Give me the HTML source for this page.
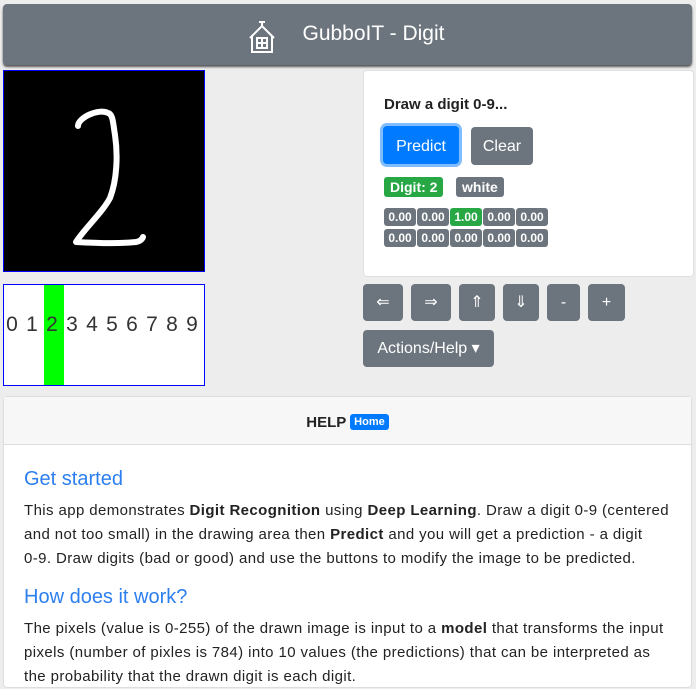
<html><head><style>
body{margin:0;background:#ededed;font-family:"Liberation Sans",sans-serif;width:696px;height:676px;overflow:hidden;position:relative}
.hdr{position:absolute;left:3px;top:4px;width:689px;height:61px;background:#6c757d;border-radius:4px;box-shadow:0 2px 2px #555;color:#fff;font-size:21px;text-align:center;line-height:60px}
.abs{position:absolute}
.btn{position:absolute;background:#6c757d;color:#fff;border-radius:4px;font-size:16px;text-align:center}
.b{display:inline-block;height:18px;line-height:18px;font-size:12px;font-weight:bold;color:#fff;background:#6c757d;border-radius:3px;width:32px;text-align:center;margin-right:1px}
.d{position:absolute;top:28px;width:20px;text-align:center;font-size:21px;color:#333}
</style></head><body>
<div class="hdr"><svg class="abs" style="left:243px;top:16px" width="32" height="34" viewBox="0 0 32 34" fill="none" stroke="#fff" stroke-width="2"><path d="M13 2h6M16 2v4M4 18L16 6l12 12M6 16v16h20V16M11 18h10v10H11zM16 18v10M11 23h10"/></svg><span style="margin-left:52px">GubboIT - Digit</span></div>
<div class="abs" style="left:3px;top:70px;width:200px;height:200px;background:#000;border:1px solid #00f">
<svg width="200" height="200"><path d="M74 55c0-8 20-18 30-13 5 1 5 10 7 22 3 20 2 45-5 63-8 15-25 30-34 44 20 1 40 2 60 0 6-1 7-5 7-5" stroke="#fff" stroke-width="6" fill="none" stroke-linecap="round" stroke-linejoin="round"/></svg></div>
<div class="abs" style="left:3px;top:284px;width:200px;height:100px;background:#fff;border:1px solid #00f"><div class="abs" style="left:40px;top:0;width:20px;height:100px;background:#0f0"></div>
<span class="d" style="left:-2px">0</span><span class="d" style="left:18px">1</span><span class="d" style="left:38px">2</span><span class="d" style="left:58px">3</span><span class="d" style="left:78px">4</span><span class="d" style="left:98px">5</span><span class="d" style="left:118px">6</span><span class="d" style="left:138px">7</span><span class="d" style="left:158px">8</span><span class="d" style="left:178px">9</span></div>
<div class="abs" style="left:363px;top:70px;width:329px;height:205px;background:#fff;border-radius:4px;border:1px solid #e0e0e0"></div>
<div class="abs" style="left:384px;top:96px;font-size:15px;font-weight:bold;color:#222">Draw a digit 0-9...</div>
<div class="btn" style="left:383px;top:126px;width:76px;height:38px;line-height:42px;background:#007bff;box-shadow:0 0 0 3px #80bdff">Predict</div>
<div class="btn" style="left:471px;top:127px;width:62px;height:38px;line-height:40px">Clear</div>
<div class="abs" style="left:384px;top:177px;height:20px;line-height:20px;padding:0 6px;background:#28a745;color:#fff;font-weight:bold;font-size:14px;border-radius:3px">Digit: 2</div>
<div class="abs" style="left:456px;top:177px;height:20px;line-height:20px;padding:0 6px;background:#6c757d;color:#fff;font-weight:bold;font-size:14px;border-radius:3px">white</div>
<div class="abs" style="left:384px;top:208px"><span class="b">0.00</span><span class="b">0.00</span><span class="b" style="background:#28a745">1.00</span><span class="b">0.00</span><span class="b">0.00</span></div>
<div class="abs" style="left:384px;top:229px"><span class="b">0.00</span><span class="b">0.00</span><span class="b">0.00</span><span class="b">0.00</span><span class="b">0.00</span></div>
<div class="btn" style="left:363px;top:284px;width:40px;height:37px;line-height:37px">⇐</div>
<div class="btn" style="left:411px;top:284px;width:40px;height:37px;line-height:37px">⇒</div>
<div class="btn" style="left:459px;top:284px;width:36px;height:37px;line-height:37px">⇑</div>
<div class="btn" style="left:503px;top:284px;width:36px;height:37px;line-height:37px">⇓</div>
<div class="btn" style="left:547px;top:284px;width:33px;height:37px;line-height:37px">-</div>
<div class="btn" style="left:588px;top:284px;width:37px;height:37px;line-height:37px">+</div>
<div class="btn" style="left:363px;top:330px;width:131px;height:37px;line-height:37px">Actions/Help ▾</div>
<div class="abs" style="left:3px;top:396px;width:687px;height:290px;background:#fff;border:1px solid #ddd;border-radius:4px">
<div style="height:47px;background:#f7f7f7;border-bottom:1px solid #ddd;text-align:center;line-height:50px;font-weight:bold;font-size:15px;color:#222">HELP <span style="background:#007bff;color:#fff;font-size:11px;padding:2px 4px;border-radius:3px;vertical-align:2px">Home</span></div>
<div style="padding:0 20px;font-size:15px;line-height:24px;color:#222;letter-spacing:0.4px">
<div style="color:#2d7ff0;font-size:20px;margin:22px 0 8px;letter-spacing:0">Get started</div>
<div>This app demonstrates <b>Digit Recognition</b> using <b>Deep Learning</b>. Draw a digit 0-9 (centered and not too small) in the drawing area then <b>Predict</b> and you will get a prediction - a digit <span style="white-space:nowrap">0-9.</span> Draw digits (bad or good) and use the buttons to modify the image to be predicted.</div>
<div style="color:#2d7ff0;font-size:20px;margin:14px 0 8px;letter-spacing:0">How does it work?</div>
<div>The pixels (value is 0-255) of the drawn image is input to a <b>model</b> that transforms the input pixels (number of pixles is 784) into 10 values (the predictions) that can be interpreted as the probability that the drawn digit is each digit.</div>
</div></div>
</body></html>
